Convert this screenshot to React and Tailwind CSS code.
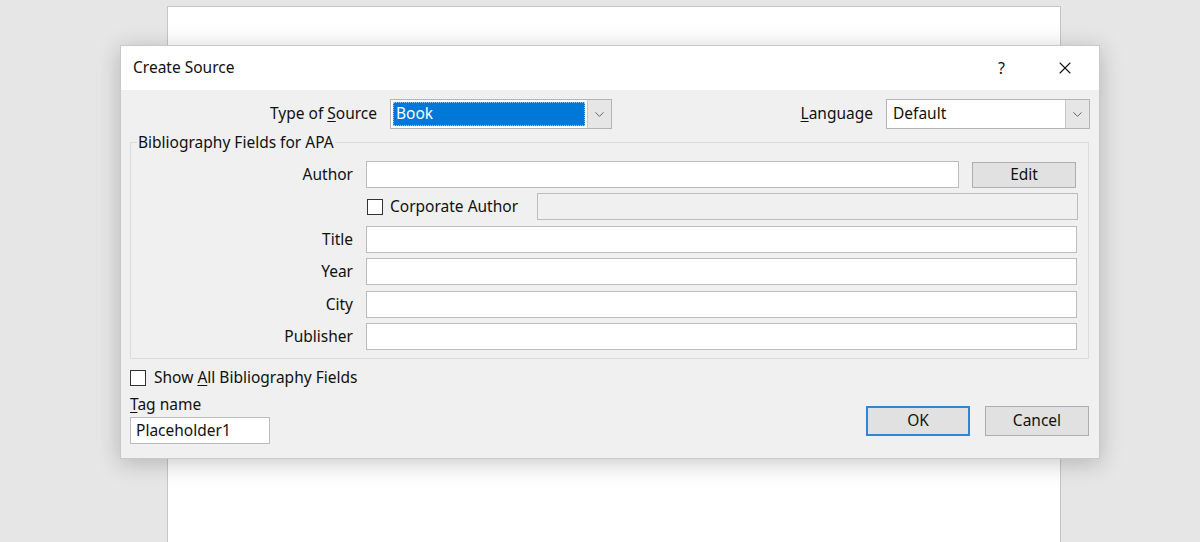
import { ChevronDown, X } from "lucide-react";

const font = { fontFamily: '"Noto Sans", "Open Sans", sans-serif' };

function Combo({ width, children, selected }) {
  return (
    <div className={`flex h-[30px] ${width} border border-[#b4b4b4] bg-white`}>
      <div className="flex flex-1 items-center p-[2px]">
        {selected ? (
          <div className="flex h-full w-full items-center border border-dotted border-[#9cc8f0] bg-[#0078d7] pl-[2px] text-white">
            {children}
          </div>
        ) : (
          <div className="pl-[4px]">{children}</div>
        )}
      </div>
      <div className="flex w-[24px] items-center justify-center border-l border-[#c8c8c8] bg-[#e6e6e6]">
        <ChevronDown className="h-[15px] w-[15px] text-[#5c5c5c]" strokeWidth={1.5} />
      </div>
    </div>
  );
}

function Field({ label, mt, children }) {
  return (
    <div className={`flex items-center ${mt}`}>
      <div className="w-[222px] text-right">{label}</div>
      <div className="ml-[13px] flex items-center">{children}</div>
    </div>
  );
}

function Input({ width, disabled, children, h = "h-[27px]" }) {
  return (
    <div
      className={`flex ${h} ${width} items-center border border-[#bcbcbc] pl-[5px] ${
        disabled ? "bg-[#f0f0f0]" : "bg-white"
      }`}
    >
      {children}
    </div>
  );
}

function Checkbox() {
  return <div className="h-[16px] w-[16px] border border-[#333] bg-white" />;
}

export default function App() {
  return (
    <div className="relative h-[542px] overflow-hidden bg-[#e6e6e6] text-[15.5px] text-[#111]" style={font}>
      {/* document page behind the dialog */}
      <div className="ml-[167px] mt-[6px] h-[560px] w-[894px] border border-[#c6c6c6] bg-white" />

      <div className="absolute left-[120px] top-[45px] flex h-[414px] w-[980px] flex-col border border-[#c9c9c9] bg-[#f0f0f0] shadow-[0_4px_22px_rgba(0,0,0,0.22)]">
        {/* title bar */}
        <div className="flex h-[44px] items-center bg-white pl-[12px]">
          <span>Create Source</span>
          <span className="ml-auto mr-[50px] text-[16px]">?</span>
          <X className="mr-[24px] h-[20px] w-[20px]" strokeWidth={1.3} />
        </div>

        {/* type of source / language */}
        <div className="mt-[9px] flex items-center">
          <div className="w-[256px] text-right">
            Type of <u className="underline-offset-2">S</u>ource
          </div>
          <div className="ml-[13px]">
            <Combo width="w-[222px]" selected>
              Book
            </Combo>
          </div>
          <div className="ml-auto">
            <u className="underline-offset-2">L</u>anguage
          </div>
          <div className="ml-[13px] mr-[9px]">
            <Combo width="w-[204px]">Default</Combo>
          </div>
        </div>

        {/* bibliography group */}
        <fieldset className="ml-[9px] mt-[3px] h-[227px] w-[959px] border border-[#dcdcdc] pr-[10px]">
          <legend className="ml-[6px] px-[1px] leading-[20px]">Bibliography Fields for APA</legend>
          <Field label="Author" mt="mt-[9px]">
            <Input width="w-[593px]" />
            <button className="ml-[13px] h-[26px] w-[104px] border border-[#adadad] bg-[#e1e1e1]">Edit</button>
          </Field>
          <div className="ml-[236px] mt-[5px] flex items-center">
            <Checkbox />
            <span className="ml-[7px]">Corporate Author</span>
            <div className="ml-auto">
              <Input width="w-[541px]" disabled />
            </div>
          </div>
          <Field label="Title" mt="mt-[6px]">
            <Input width="w-[711px]" />
          </Field>
          <Field label="Year" mt="mt-[5px]">
            <Input width="w-[711px]" />
          </Field>
          <Field label="City" mt="mt-[6px]">
            <Input width="w-[711px]" />
          </Field>
          <Field label="Publisher" mt="mt-[5px]">
            <Input width="w-[711px]" />
          </Field>
        </fieldset>

        {/* bottom area */}
        <div className="ml-[9px] mt-[9px] flex h-[20px] items-center">
          <Checkbox />
          <span className="ml-[8px]">
            Show <u className="underline-offset-2">A</u>ll Bibliography Fields
          </span>
        </div>
        <div className="flex pl-[9px] pr-[10px]">
          <div className="mt-[6px] flex flex-col">
            <div className="leading-[20px]">
              <u className="underline-offset-2">T</u>ag name
            </div>
            <div className="mt-[3px]">
              <Input width="w-[140px]" h="h-[27px]">
                Placeholder1
              </Input>
            </div>
          </div>
          <div className="ml-auto mt-[18px] flex gap-[15px]">
            <button className="h-[30px] w-[104px] border-2 border-[#2f86d2] bg-[#e1e1e1]">OK</button>
            <button className="h-[30px] w-[104px] border border-[#adadad] bg-[#e1e1e1]">Cancel</button>
          </div>
        </div>
      </div>
    </div>
  );
}
